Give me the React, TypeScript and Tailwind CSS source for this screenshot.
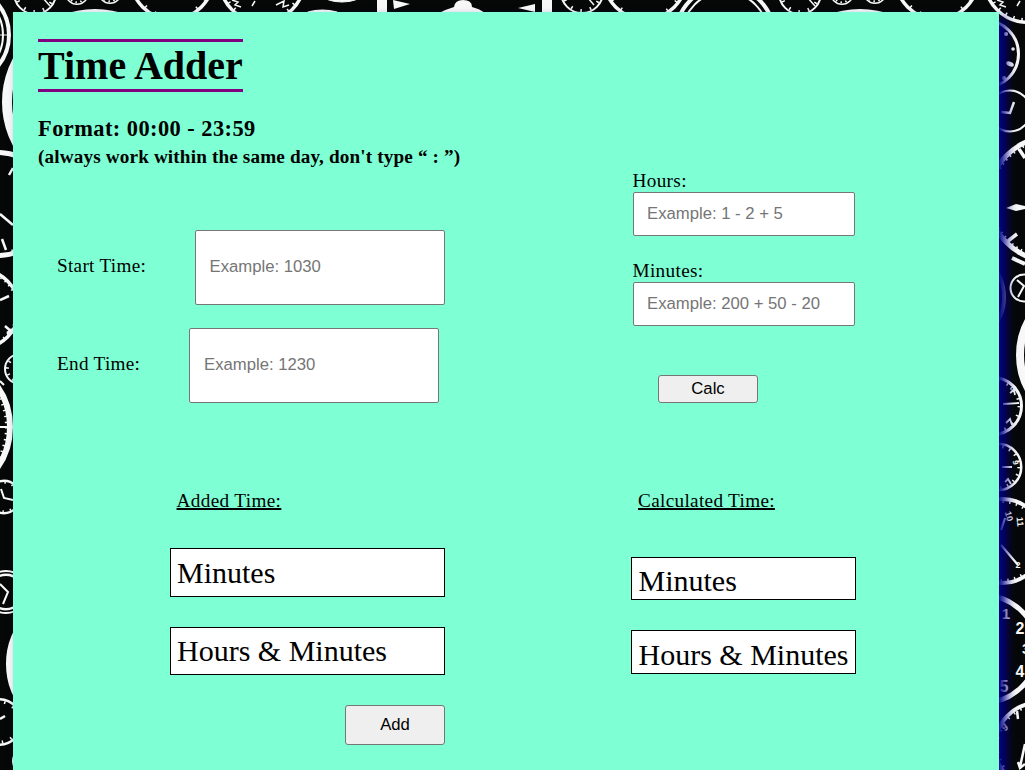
import type { ReactNode } from "react";

type RingProps = { x: number; y: number; r: number; w?: number; ticks?: number; len?: number };

function Ring({ x, y, r, w = 3, ticks = 0, len = 3 }: RingProps) {
  const inner = r - w / 2 - 1 - len / 2;
  const step = (2 * Math.PI * inner) / (ticks || 1);
  return (
    <g>
      <circle cx={x} cy={y} r={r - w / 2} strokeWidth={w} />
      {ticks > 0 && (
        <circle cx={x} cy={y} r={inner} strokeWidth={len} strokeDasharray={`1.5 ${step - 1.5}`} />
      )}
    </g>
  );
}

function TopClocks({ dx }: { dx: number }) {
  return (
    <g transform={`translate(${dx} 0)`}>
      <Ring x={-40} y={35} r={51} w={4} />
      <Ring x={-40} y={35} r={44} w={2} />
      <Ring x={35} y={-7} r={22} w={2} ticks={12} />
      <path d="M42 -3L50 6" strokeWidth={1.5} />
      <Ring x={77} y={-7} r={12} w={1.5} ticks={12} len={2} />
      <Ring x={110} y={-8} r={12} w={1.5} ticks={12} len={2} />
      <Ring x={95} y={102} r={93} w={10} />
      <Ring x={172} y={-22} r={43} w={3.5} ticks={22} />
      <Ring x={262} y={-20} r={44} w={3.5} ticks={30} />
      <path d="M232 0l6 2-3 3 6 2M276 5l8-4-1 6 6-2M255 1l-3 5" strokeWidth={1.5} />
    </g>
  );
}

function ClockBackdrop() {
  return (
    <svg className="absolute inset-0 h-full w-full" viewBox="0 0 1025 770" fill="none" stroke="#f8f8f8" aria-hidden="true">
      <TopClocks dx={0} />
      <TopClocks dx={765} />
      <ellipse cx={342} cy={-6} rx={20} ry={8} fill="#f8f8f8" />
      <path d="M382 0V12M547 0V12" strokeWidth={10} />
      <path d="M393 0L410 4L394 9ZM535 4L518 8L535 12Z" fill="#f8f8f8" stroke="none" />
      <path d="M439 13Q447 9 454 7Q455 0 463 0Q472 0 472 7Q480 9 485 13Z" fill="#f8f8f8" stroke="none" />
      <Ring x={582} y={-8} r={22} w={2} ticks={12} />
      <path d="M588 -2L594 5" strokeWidth={1.5} />
      <Ring x={645} y={-22} r={43} w={3.5} ticks={20} />
      <path d="M308 13Q322 9 337 13" strokeWidth={3} />

      <path d="M0 35H8" />
      <Ring x={-2} y={204} r={54} w={5} ticks={20} />
      <path d="M0 214L13 225M2 239L6 250M13 168L9 175" strokeWidth={2.5} />
      <Ring x={-20} y={309} r={41} w={3.5} ticks={44} len={2} />
      <path d="M0 300L9 296M5 326L13 333M7 333L13 329" strokeWidth={2.5} />
      <Ring x={20} y={369} r={16} w={2} ticks={12} />
      <Ring x={-61} y={427} r={74} w={6} ticks={70} len={4} />
      <path d="M0 427H10M0 381L4 385" strokeWidth={2} />
      <Ring x={4} y={497} r={17.5} w={2.5} ticks={12} len={2} />
      <path d="M1 489L4 498L13 500" strokeWidth={2} />
      <Ring x={6} y={592} r={22} w={2} />
      <Ring x={6} y={592} r={18.5} w={2.5} />
      <path d="M0 584L8 592L3 604" strokeWidth={2} />
      <Ring x={78} y={664} r={72} w={16} />
      <Ring x={-1} y={722} r={24} w={2.5} ticks={14} />
      <path d="M0 719L5 716" strokeWidth={2.5} />
      <Ring x={27} y={761} r={15} w={2} />

      <Ring x={985} y={54} r={35} w={3} />
      <g fill="#f8f8f8" stroke="none">
        <circle cx={1006} cy={34} r={2} />
        <circle cx={1013} cy={49} r={1.8} />
        <ellipse cx={1010} cy={64} rx={4} ry={2.3} transform="rotate(25 1010 64)" />
        <circle cx={1004} cy={78} r={2} />
        <path d="M1006 208L1016 204L1025 206V209L1016 211Z" />
      </g>
      <Ring x={1010} y={111} r={21.5} w={2} />
      <path d="M1014 102L1010 113L1001 112" strokeWidth={2.5} />
      <Ring x={1050} y={199} r={64} w={5} ticks={70} />
      <path d="M1019 149L1025 158M1008 241L1017 234" strokeWidth={3.5} />
      <g opacity={0.5}>
        <Ring x={956} y={297} r={50} w={4} />
      </g>
      <path d="M1012 258L1025 264" strokeWidth={4} />
      <Ring x={1024} y={288} r={14.5} w={2} />
      <path d="M1017 280L1024 286L1018 297" strokeWidth={2} />
      <Ring x={1091} y={355} r={75} w={8} />
      <Ring x={993} y={406} r={30} w={3} ticks={18} />
      <path d="M1003 404L1019 403M1006 423l4-4 2 6M1010 393l4-3 1 5" strokeWidth={1.8} />
      <Ring x={998} y={467} r={24.5} w={2.5} ticks={18} />
      <path d="M1002 467H1012M1005 482l3-3 3 5" strokeWidth={1.8} />
      <Ring x={1002} y={541} r={44} w={4} ticks={36} />
      <path d="M1001 545L1018 565M1001 530L1005 518" strokeWidth={2.2} />
      <Ring x={984} y={649} r={56} w={5} />
      <Ring x={1038} y={746} r={45} w={4} ticks={34} />
      <path d="M1017 711L1018 719M1025 744L1020 767M1018 762L1020 768L1025 764" strokeWidth={2.5} />
      <g className="font-['Liberation_Sans'] font-bold" fill="#f8f8f8" stroke="none" textAnchor="middle" fontSize={16}>
        <text x={1006} y={619} fontSize={15}>1</text>
        <text x={1020} y={634}>2</text>
        <text x={1026} y={654} fontSize={14}>3</text>
        <text x={1020} y={677}>4</text>
        <text x={1004} y={692}>5</text>
        <text fontSize={9} transform="translate(1006 517) rotate(75)">10</text>
        <text fontSize={9} transform="translate(1017 522) rotate(85)">11</text>
        <text fontSize={9} x={1018} y={568}>2</text>
        <text fontSize={10} transform="translate(1007 730) rotate(-40)">9</text>
        <text fontSize={8} transform="translate(1013 463) rotate(80)">9</text>
        <text fontSize={8} transform="translate(1011 390) rotate(50)">8</text>
      </g>
    </svg>
  );
}

function ResultBox({ className, children }: { className: string; children: ReactNode }) {
  return (
    <div className={`border border-black bg-white text-[30px] whitespace-nowrap ${className}`}>{children}</div>
  );
}

const field =
  "block rounded-[2px] border border-[#767676] bg-white font-['Liberation_Sans',sans-serif] text-[16.7px] text-black outline-none placeholder:text-[#757575]";
const button =
  "block w-[100px] rounded-[3px] border border-[#767676] bg-[#efefef] text-center font-['Liberation_Sans',sans-serif] text-[16.7px] tracking-normal text-black";

export default function App() {
  return (
    <div className="relative h-[770px] w-full overflow-hidden bg-[#060807] pt-3 pl-[13px]">
      <ClockBackdrop />
      <main className="relative h-[900px] w-[986px] bg-[#7fffd4] pt-[27px] pl-[25px] font-['Liberation_Serif',serif] text-black shadow-[7px_7px_10px_#00008b]">
        <h1 className="h-[53px] w-[205px] border-y-3 border-[#800080] text-[40px] leading-[48px] font-bold whitespace-nowrap">
          Time Adder
        </h1>
        <h2 className="mt-6 h-[26px] text-[22.4px] leading-[26px] font-bold tracking-[0.45px]">Format: 00:00 - 23:59</h2>
        <h3 className="mt-[4px] h-[22px] text-[19.2px] leading-[22px] font-bold tracking-[0.14px]">
          (always work within the same day, don't type “ : ”)
        </h3>

        <div className="flex text-[19.2px] leading-[22px]">
          <section className="w-[593px]">
            <div className="mt-[62px] flex h-[75px] items-center pl-[19px]">
              <label htmlFor="start" className="w-[138px] pb-1 tracking-[0.3px]">Start Time:</label>
              <input id="start" placeholder="Example: 1030" className={`${field} h-[75px] w-[250px] pb-px pl-[13.5px]`} />
            </div>
            <div className="mt-[23px] flex h-[75px] items-center pl-[19px]">
              <label htmlFor="end" className="w-[132px] pb-1 tracking-[0.3px]">End Time:</label>
              <input id="end" placeholder="Example: 1230" className={`${field} h-[75px] w-[250px] pb-px pl-[14px]`} />
            </div>
            <h4 className="mt-[87px] ml-[138.5px] h-[22px] tracking-[0.37px] underline decoration-2">Added Time:</h4>
            <ResultBox className="mt-[36px] ml-[132px] h-[49px] w-[275px] pl-[6px] leading-[48px]">Minutes</ResultBox>
            <ResultBox className="mt-[30px] ml-[132px] h-[48px] w-[275px] pl-[6px] leading-[46px]">Hours &amp; Minutes</ResultBox>
            <button type="button" className={`${button} mt-[30px] ml-[307px] h-10`}>Add</button>
          </section>
          <section>
            <label htmlFor="hours" className="mt-[2px] ml-[1.5px] block h-[22px] tracking-[0.35px]">Hours:</label>
            <input id="hours" placeholder="Example: 1 - 2 + 5" className={`${field} ml-[2px] h-[44px] w-[222px] pb-px pl-[13px]`} />
            <label htmlFor="minutes" className="mt-[24px] ml-[1.5px] block h-[22px] tracking-[0.35px]">Minutes:</label>
            <input id="minutes" placeholder="Example: 200 + 50 - 20" className={`${field} ml-[2px] h-[44px] w-[222px] pb-px pl-[13px]`} />
            <button type="button" className={`${button} mt-[49px] ml-[27px] h-7 pb-px`}>Calc</button>
            <h4 className="mt-[87px] ml-[7px] h-[22px] tracking-[0.33px] underline decoration-2">Calculated Time:</h4>
            <ResultBox className="mt-[45px] h-[43px] w-[225px] pl-[6.5px] leading-[46px]">Minutes</ResultBox>
            <ResultBox className="mt-[30px] h-[44px] w-[225px] pl-[6.5px] leading-[48px]">Hours &amp; Minutes</ResultBox>
          </section>
        </div>
      </main>
    </div>
  );
}
